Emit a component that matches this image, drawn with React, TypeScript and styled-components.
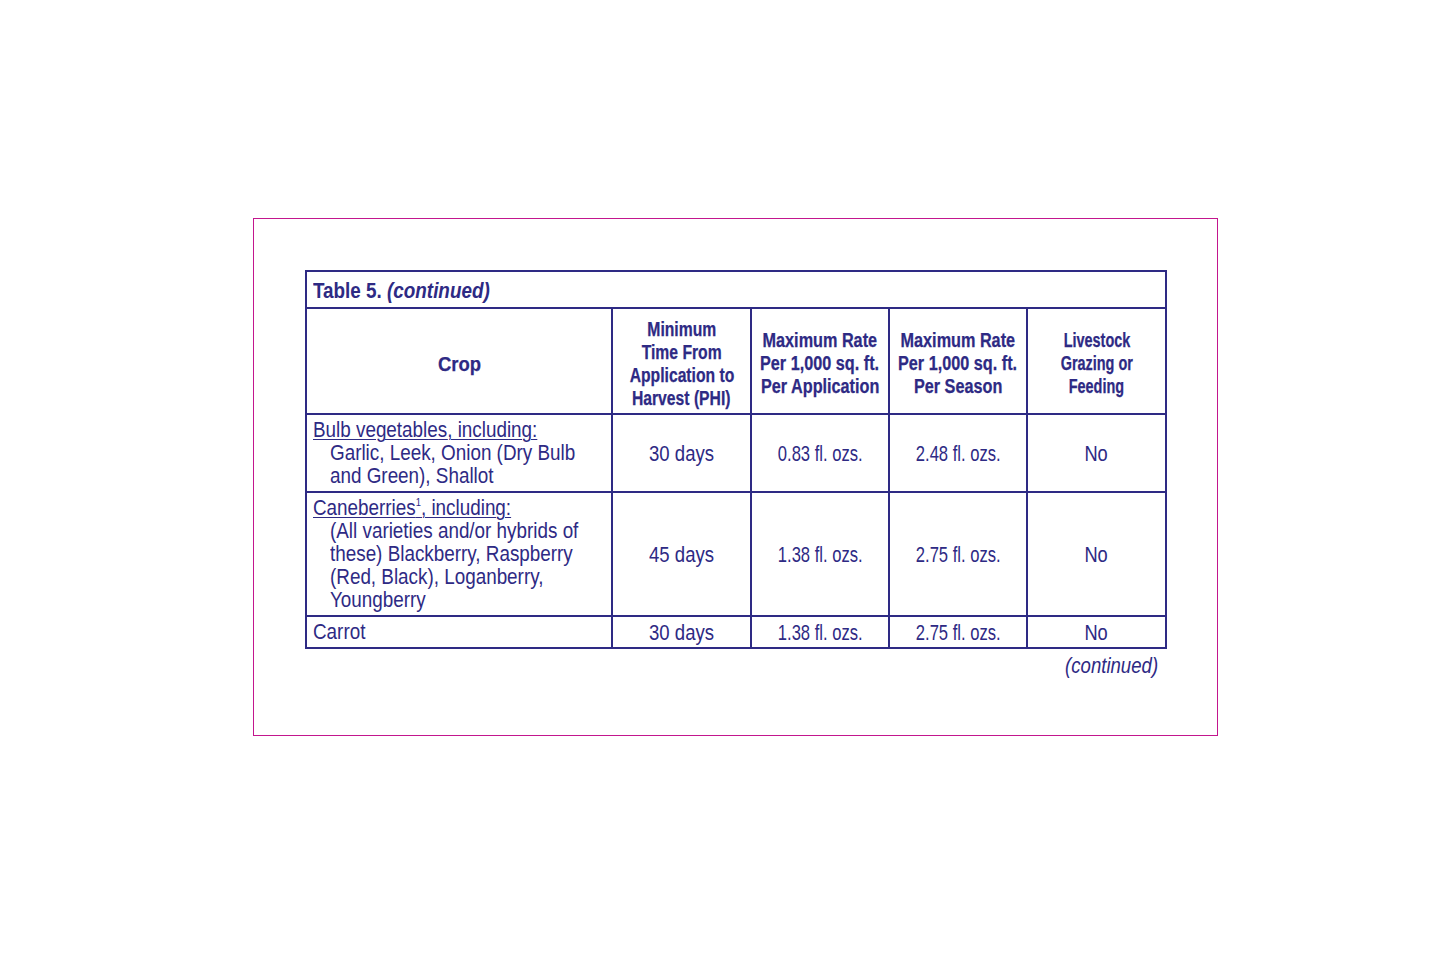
import styled, { createGlobalStyle } from 'styled-components';

const GlobalStyle = createGlobalStyle`
  html, body {
    margin: 0;
    padding: 0;
    background: #ffffff;
  }
  body {
    font-family: 'Liberation Sans', Arial, sans-serif;
    color: #2e2a84;
  }
`;

const ink = '#2e2a84';

// the printed label uses a condensed face; Liberation Sans is squeezed per column to match
const BODY = 0.857;
const DAYS = 0.844;
const OZS = 0.755;
const NO = 0.83;

type Row = {
  crop: string;
  note?: string;
  lines: string[];
  phi: string;
  perApp: string;
  perSeason: string;
  grazing: string;
  height: number;
};

const rows: Row[] = [
  {
    crop: 'Bulb vegetables',
    lines: ['Garlic, Leek, Onion (Dry Bulb', 'and Green), Shallot'],
    phi: '30 days',
    perApp: '0.83 fl. ozs.',
    perSeason: '2.48 fl. ozs.',
    grazing: 'No',
    height: 78,
  },
  {
    crop: 'Caneberries',
    note: '1',
    lines: [
      '(All varieties and/or hybrids of',
      'these) Blackberry, Raspberry',
      '(Red, Black), Loganberry,',
      'Youngberry',
    ],
    phi: '45 days',
    perApp: '1.38 fl. ozs.',
    perSeason: '2.75 fl. ozs.',
    grazing: 'No',
    height: 124,
  },
  {
    crop: 'Carrot',
    lines: [],
    phi: '30 days',
    perApp: '1.38 fl. ozs.',
    perSeason: '2.75 fl. ozs.',
    grazing: 'No',
    height: 32,
  },
];

const headers: { lines: string[]; scale: number; size: number }[] = [
  { lines: ['Crop'], scale: 0.88, size: 21 },
  { lines: ['Minimum', 'Time From', 'Application to', 'Harvest (PHI)'], scale: 0.805, size: 19.5 },
  { lines: ['Maximum Rate', 'Per 1,000 sq. ft.', 'Per Application'], scale: 0.832, size: 19.5 },
  { lines: ['Maximum Rate', 'Per 1,000 sq. ft.', 'Per Season'], scale: 0.832, size: 19.5 },
  { lines: ['Livestock', 'Grazing or', 'Feeding'], scale: 0.74, size: 19.5 },
];

function App() {
  return (
    <>
      <GlobalStyle />
      <Frame>
        <Table>
          <colgroup>
            <col style={{ width: 306 }} />
            <col style={{ width: 139 }} />
            <col style={{ width: 138 }} />
            <col style={{ width: 138 }} />
            <col style={{ width: 139 }} />
          </colgroup>
          <thead>
            <TitleRow>
              <Caption colSpan={5}>
                <Lines>
                  <Line $scale={BODY}>
                    Table 5. <em>(continued)</em>
                  </Line>
                </Lines>
              </Caption>
            </TitleRow>
            <HeadRow>
              {headers.map((h, i) => (
                <HeadCell key={i} $size={h.size}>
                  <Lines $center>
                    {h.lines.map((l) => (
                      <Line key={l} $scale={h.scale} $center>
                        {l}
                      </Line>
                    ))}
                  </Lines>
                </HeadCell>
              ))}
            </HeadRow>
          </thead>
          <tbody>
            {rows.map((r) => (
              <tr key={r.crop} style={{ height: r.height }}>
                <CropCell>
                  <Lines>
                    {r.lines.length > 0 ? (
                      <Line $scale={BODY}>
                        <Underlined>
                          {r.crop}
                          {r.note && <Note>{r.note}</Note>}, including:
                        </Underlined>
                      </Line>
                    ) : (
                      <Line $scale={BODY}>{r.crop}</Line>
                    )}
                    {r.lines.map((l) => (
                      <Line key={l} $scale={BODY} $indent>
                        {l}
                      </Line>
                    ))}
                  </Lines>
                </CropCell>
                <Cell>
                  <Lines $center>
                    <Line $scale={DAYS} $center>{r.phi}</Line>
                  </Lines>
                </Cell>
                <Cell>
                  <Lines $center>
                    <Line $scale={OZS} $center>{r.perApp}</Line>
                  </Lines>
                </Cell>
                <Cell>
                  <Lines $center>
                    <Line $scale={OZS} $center>{r.perSeason}</Line>
                  </Lines>
                </Cell>
                <Cell>
                  <Lines $center>
                    <Line $scale={NO} $center>{r.grazing}</Line>
                  </Lines>
                </Cell>
              </tr>
            ))}
          </tbody>
        </Table>
        <Continued>
          <ContinuedText>(continued)</ContinuedText>
        </Continued>
      </Frame>
    </>
  );
}

export default App;

const Frame = styled.section`
  box-sizing: border-box;
  width: 965px;
  height: 518px;
  margin: 218px 0 0 253px;
  padding: 51px 0 0 51px;
  border: 1px solid #c3168e;
`;

const Table = styled.table`
  width: 862px;
  border-collapse: collapse;
  table-layout: fixed;
  border: 2px solid ${ink};
  color: ${ink};
  font-size: 22px;
  line-height: 23px;

  td,
  th {
    border: 2px solid ${ink};
    padding: 0;
    overflow: visible;
  }
`;

const Lines = styled.div<{ $center?: boolean }>`
  display: flex;
  flex-direction: column;
  align-items: ${({ $center }) => ($center ? 'center' : 'flex-start')};
`;

const Line = styled.span<{ $scale: number; $center?: boolean; $indent?: boolean }>`
  display: block;
  white-space: nowrap;
  margin-left: ${({ $indent }) => ($indent ? '17px' : '0')};
  transform: scaleX(${({ $scale }) => $scale});
  transform-origin: ${({ $center }) => ($center ? 'center' : 'left')} center;
`;

const TitleRow = styled.tr`
  height: 37px;
`;

const Caption = styled.th`
  padding: 7px 6px 0 !important;
  vertical-align: top;
  text-align: left;
  font-weight: bold;

  em {
    font-style: italic;
  }
`;

const HeadRow = styled.tr`
  height: 106px;
`;

const HeadCell = styled.th<{ $size: number }>`
  padding-top: 5px !important;
  vertical-align: middle;
  font-size: ${({ $size }) => $size}px;
  font-weight: bold;
  line-height: 23px;
  -webkit-text-stroke: 0.25px ${ink};
`;

const CropCell = styled.td`
  padding: 3px 6px 0 !important;
  vertical-align: top;
`;

const Underlined = styled.span`
  text-decoration: underline;
  text-decoration-thickness: 1px;
  text-underline-offset: 2px;
`;

const Note = styled.sup`
  font-size: 11px;
  line-height: 0;
  vertical-align: 9px;
`;

const Cell = styled.td`
  vertical-align: middle;
`;

const Continued = styled.div`
  width: 853px;
  margin-top: 5px;
  display: flex;
  justify-content: flex-end;
  font-size: 22px;
  line-height: 23px;
  color: ${ink};
`;

const ContinuedText = styled.span`
  font-style: italic;
  white-space: nowrap;
  transform: scaleX(0.845);
  transform-origin: right center;
`;
